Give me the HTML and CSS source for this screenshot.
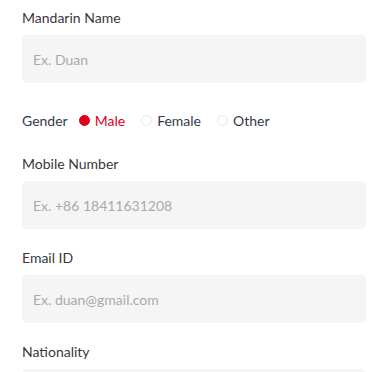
FILE: index.html
```html
<!DOCTYPE html>
<html lang="en">

<head>
    <meta charset="utf-8">
    <meta name="viewport" content="width=device-width, initial-scale=1.0">
    <title>Profile</title>
    <link rel="stylesheet" href="styles.css">
</head>

<body>
    <form class="profil">
        <div class="felt">
            <label for="navn">Mandarin Name</label>
            <input id="navn" type="text" placeholder="Ex. Duan">
        </div>

        <div class="koen">
            <span class="koen-titel">Gender</span>
            <label class="valg valgt"><span class="prik"></span>Male</label>
            <label class="valg"><span class="prik"></span>Female</label>
            <label class="valg"><span class="prik"></span>Other</label>
        </div>

        <div class="felt">
            <label for="mobil">Mobile Number</label>
            <input id="mobil" type="text" placeholder="Ex. +86 18411631208">
        </div>

        <div class="felt">
            <label for="email">Email ID</label>
            <input id="email" type="text" placeholder="Ex. duan@gmail.com">
        </div>

        <div class="felt">
            <label for="land">Nationality</label>
            <input id="land" type="text">
        </div>
    </form>
</body></html>
```

FILE: styles.css
```css
* {
    box-sizing: border-box;
}

body {
    margin: 0;
    background-color: #ffffff;
    font-family: 'Lato', 'Open Sans', sans-serif;
}

.profil {
    padding: 8px 9px 0 22px;
}

.felt {
    display: flex;
    flex-direction: column;
    margin-bottom: 19px;
}

.felt label {
    font-size: 14px;
    line-height: 20px;
    color: #383838;
    margin-bottom: 7px;
}

.felt input {
    height: 48px;
    border: none;
    outline: none;
    border-radius: 5px;
    background-color: #f5f5f5;
    padding: 0 11px;
    font-family: 'Lato', sans-serif;
    font-size: 14px;
    color: #333333;
}

.felt input::placeholder {
    color: #aaaaaa;
}

.koen {
    display: flex;
    align-items: center;
    height: 20px;
    margin: 27px 0 24px;
    font-size: 14px;
    color: #353a4a;
}

.koen-titel {
    margin-right: 11px;
}

.valg {
    display: flex;
    align-items: center;
    margin-right: 16px;
}

.prik {
    width: 11px;
    height: 11px;
    border-radius: 50%;
    border: 1px solid #e6e6e8;
    margin-right: 5px;
}

.valgt {
    color: #e0001b;
}

.valgt .prik {
    background-color: #e0001b;
    border-color: #e0001b;
}
```
